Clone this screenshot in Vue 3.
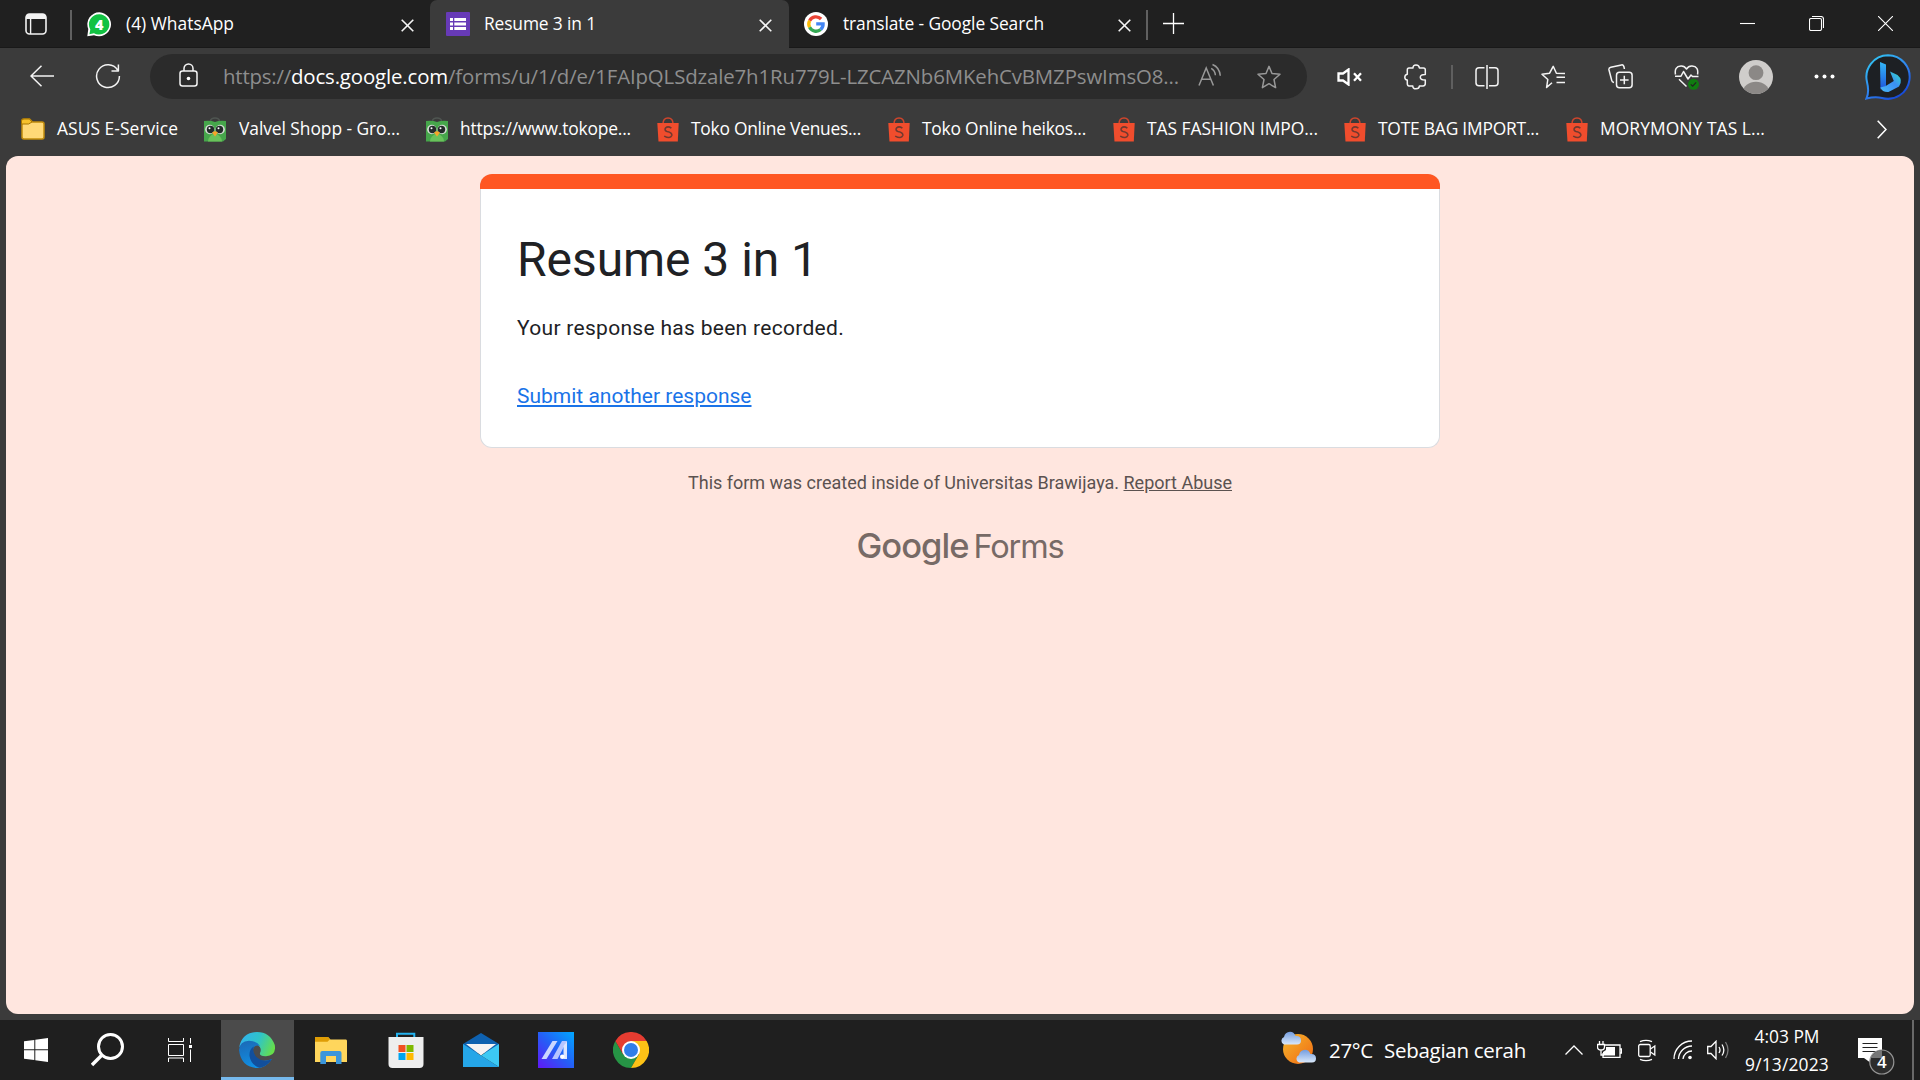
<script setup>
const bookmarks = [
  { icon: 'folder', label: 'ASUS E-Service', cell: 184, pad: 37, text: 121 },
  { icon: 'owl', label: 'Valvel Shopp - Gro...', cell: 222, pad: 35, text: 161 },
  { icon: 'owl', label: 'https://www.tokope...', cell: 231, pad: 34, text: 171 },
  { icon: 'bag', label: 'Toko Online Venues...', cell: 231, pad: 34, text: 170 },
  { icon: 'bag', label: 'Toko Online heikos...', cell: 225, pad: 34, text: 164 },
  { icon: 'bag', label: 'TAS FASHION IMPO...', cell: 231, pad: 34, text: 171 },
  { icon: 'bag', label: 'TOTE BAG IMPORT...', cell: 222, pad: 34, text: 161 },
  { icon: 'bag', label: 'MORYMONY TAS L...', cell: 220, pad: 34, text: 165 },
]

// Spreads a run of text over the given width by tracking.
const vFit = {
  mounted(el, { value }) {
    const width = el.getBoundingClientRect().width
    el.style.letterSpacing = (value - width) / el.textContent.length + 'px'
  },
}
</script>

<template>
  <div class="screen">
    <header class="tabs">
      <div class="workspace">
        <svg width="22" height="22" viewBox="0 0 22 22"><rect x="1" y="1" width="20" height="20" rx="3.5" fill="none" stroke="#f2f2f2" stroke-width="1.6" /><path d="M1 6V4Q1 1 4 1H18Q21 1 21 4V6Z" fill="#f2f2f2" /><path d="M5.6 5V21" stroke="#f2f2f2" stroke-width="1.4" /></svg>
      </div>
      <i class="vline"></i>
      <div class="tab first">
        <svg class="fav" width="25" height="25" viewBox="0 0 25 25"><path d="M12.5 .3A12 12 0 1 1 7 23.2L.3 24.2 1.3 17A12 12 0 0 1 12.5 .3Z" fill="#fff" /><path d="M12.5 2.2A10.2 10.2 0 1 1 7 21.2L2.4 22.2 3.3 17.4A10.2 10.2 0 0 1 12.5 2.2Z" fill="#12c243" /><text x="12.3" y="17.6" text-anchor="middle" font-family="Open Sans, sans-serif" font-weight="800" font-size="14.5" fill="#fff">4</text></svg>
        <span class="title"><span v-fit="108">(4) WhatsApp</span></span>
        <svg class="x" width="13" height="13" viewBox="0 0 13 13"><path d="M.7.7 12.3 12.3M12.3.7.7 12.3" /></svg>
      </div>
      <div class="tab active">
        <svg class="fav" width="24" height="24" viewBox="0 0 24 24"><rect width="24" height="24" rx="1" fill="#673ab7" /><path d="M4 6h3v3H4zM8.3 6H20v3H8.3zM4 10.5h3v3H4zM8.3 10.5H20v3H8.3zM4 15h3v3H4zM8.3 15H20v3H8.3z" fill="#fff" /></svg>
        <span class="title"><span v-fit="112">Resume 3 in 1</span></span>
        <svg class="x" width="13" height="13" viewBox="0 0 13 13"><path d="M.7.7 12.3 12.3M12.3.7.7 12.3" /></svg>
      </div>
      <div class="tab last">
        <svg class="fav" width="24" height="24" viewBox="0 0 24 24"><circle cx="12" cy="12" r="12" fill="#fff" /><g fill="none" stroke-width="3.3"><path d="M17.1 7A7.2 7.2 0 0 0 5.6 8.7" stroke="#ea4335" /><path d="M5.6 8.7A7.2 7.2 0 0 0 5.6 15.3" stroke="#fbbc05" /><path d="M5.6 15.3A7.2 7.2 0 0 0 16.7 17.5" stroke="#34a853" /><path d="M16.7 17.5A7.2 7.2 0 0 0 19.1 11.8H12.2" stroke="#4285f4" /></g></svg>
        <span class="title"><span v-fit="201">translate - Google Search</span></span>
        <svg class="x" width="13" height="13" viewBox="0 0 13 13"><path d="M.7.7 12.3 12.3M12.3.7.7 12.3" /></svg>
      </div>
      <i class="vline"></i>
      <svg class="plus" width="21" height="21" viewBox="0 0 21 21"><path d="M0 10.5H21M10.5 0V21" stroke="#fff" stroke-width="1.3" /></svg>
      <div class="window">
        <svg width="15" height="15" viewBox="0 0 15 15"><path d="M0 7.5H15" /></svg>
        <svg width="15" height="15" viewBox="0 0 15 15"><rect x=".5" y="2.5" width="12" height="12" rx="1.5" /><path d="M3 .5H12Q14.5.5 14.5 3V12" /></svg>
        <svg width="15" height="15" viewBox="0 0 15 15"><path d="M0 0 15 15M15 0 0 15" /></svg>
      </div>
    </header>

    <nav class="toolbar">
      <svg class="back" width="24" height="22" viewBox="0 0 24 22"><path d="M24 11H1M11.5.7 1 11 11.5 21.3" class="ln" /></svg>
      <svg class="reload" width="26" height="26" viewBox="0 0 26 26"><path d="M22.6 7A11.4 11.4 0 1 0 24.4 13M23.4 1.5V8H16.5" class="ln" /></svg>
      <div class="address">
        <svg class="lock" width="19" height="24" viewBox="0 0 19 24"><rect x="1" y="8" width="17" height="15" rx="2.5" class="ln" /><path d="M5 8V5.5a4.5 4.5 0 0 1 9 0V8" class="ln" /><circle cx="9.5" cy="15.5" r="1.8" fill="#fff" /></svg>
        <div class="url"><span v-fit="68">https://</span><span v-fit="157" class="host">docs.google.com</span><span v-fit="731">/forms/u/1/d/e/1FAIpQLSdzale7h1Ru779L-LZCAZNb6MKehCvBMZPswImsO8...</span></div>
        <svg class="aloud" width="24" height="24" viewBox="0 0 24 24"><g fill="none" stroke="#989898" stroke-width="1.5"><path d="M1 22.5 8.2 5 15.4 22.5M3.6 16.3H12.8M13.2 5.4Q17 7.6 17.4 12.2M14.5 1.5Q21.5 4.3 22.3 12.8" /></g></svg>
        <svg width="24" height="24" viewBox="0 0 24 24"><path d="M12 1.4 15 8.5 23 9.2 17 14.5 18.6 22.6 12 18.7 5.4 22.6 7 14.5 1 9.2 9 8.5Z" fill="none" stroke="#989898" stroke-width="1.5" stroke-linejoin="round" /></svg>
      </div>
      <div class="tools">
        <div><svg width="25" height="18" viewBox="0 0 25 18"><path d="M1.5 5.5H6L11.5 1.5V16.5L6 12.5H1.5Z" fill="none" stroke="#fff" stroke-width="2.3" /><path d="M17 5.2 24 12.8M24 5.2 17 12.8" stroke="#fff" stroke-width="2.3" /></svg></div>
        <div><svg width="24" height="26" viewBox="0 0 24 26"><path class="ln" d="M5 4H9Q8.9 1 12 1T15.4 4H19.5Q21.3 4 21.3 6V10.5Q16.3 10.4 16.3 13.2T21.3 16V19.6Q21.3 22 19 22H15.4Q15.3 24.8 12 24.8T8.8 22H5Q3.3 22 3.3 19.6V16Q.8 15.6.8 13.2T3.3 10.2V6Q3.3 4 5 4Z" /></svg></div>
        <i></i>
        <div><svg width="24" height="24" viewBox="0 0 24 24"><path class="ln" d="M9.5 2.8H4Q1 2.8 1 5.8V17.8Q1 20.8 4 20.8H9.5M14 2.8H20Q23 2.8 23 5.8V17.8Q23 20.8 20 20.8H14M12 0V24" /></svg></div>
        <div><svg width="25" height="24" viewBox="0 0 25 24"><path class="ln" d="M11 17.8 5.6 22.4 6.8 14.5 1 9.2 8.6 8.2 12.2 1.3 15.4 8.2 24 8.5M15.5 12.3H24M15.5 17.5H24" /></svg></div>
        <div><svg width="25" height="25" viewBox="0 0 25 25"><path class="ln" d="M6 18.5Q4 18 3.7 16.3L1 6Q.5 3.8 2.8 3.2L13.5.9Q16 .5 16.4 5" /><rect class="ln" x="8.5" y="8.2" width="15.6" height="15.6" rx="3" /><path class="ln" d="M16.3 11.7V20.3M12 16H20.6" /></svg></div>
        <div><svg width="26" height="26" viewBox="0 0 26 26"><path class="ln" d="M1.5 10.5Q0 2.5 7 2Q10.5 1.8 12.5 5Q14.5 1.8 18 2Q25 2.5 23.5 10.5M1 12.2H7L9.5 7.5 14 15 17 11 18.5 12.5H24.5M5 15.3 12.5 22.5" /><circle cx="19.5" cy="20.3" r="5.5" fill="#107c10" /><path d="M16.8 20.3 18.7 22.2 22.2 18.3" stroke="#222" stroke-width="1.2" fill="none" /></svg></div>
        <div class="person"><svg width="34" height="34" viewBox="0 0 34 34"><clipPath id="face"><circle cx="17" cy="17" r="17" /></clipPath><g clip-path="url(#face)"><rect width="34" height="34" fill="#cfcdcb" /><circle cx="17" cy="12.7" r="7.4" fill="#8b8886" /><ellipse cx="17" cy="32" rx="13" ry="10.2" fill="#8b8886" /></g></svg></div>
        <div class="more"><svg width="21" height="5" viewBox="0 0 21 5"><g fill="#fff"><circle cx="2.5" cy="2.5" r="2" /><circle cx="10.5" cy="2.5" r="2" /><circle cx="18.5" cy="2.5" r="2" /></g></svg></div>
        <div class="bing"><svg width="46" height="46" viewBox="0 0 46 46"><defs><linearGradient id="ring" x1="0" y1="0" x2=".7" y2="1"><stop offset="0" stop-color="#32d0f5" /><stop offset=".6" stop-color="#2f82ee" /><stop offset="1" stop-color="#1649d8" /></linearGradient><linearGradient id="stem" x1="0" y1="0" x2="0" y2="1"><stop offset="0" stop-color="#34b8f8" /><stop offset="1" stop-color="#1d54dc" /></linearGradient><linearGradient id="bowl" x1="0" y1="1" x2="1" y2="0"><stop offset="0" stop-color="#49b9f7" /><stop offset=".55" stop-color="#3b8ff3" /><stop offset="1" stop-color="#30e4c5" /></linearGradient></defs><path d="M23 1.2A21.8 21.8 0 1 1 17 44Q10 42.5 1.5 44.5Q4.5 38 2 28A21.8 21.8 0 0 1 23 1.2Z" fill="#1d2024" stroke="url(#ring)" stroke-width="2" /><path d="M15 8 21 10.4V32L15.5 35.5Z" fill="url(#stem)" /><path d="M25 17.5 32.5 21Q38.5 26 34 32.5L23.5 38Q17.5 38.5 15.3 33.5L20.7 32 28.8 27Z" fill="url(#bowl)" /></svg></div>
      </div>
    </nav>

    <div class="bookmarks">
      <div v-for="b in bookmarks" :key="b.label" class="bookmark" :style="{ width: b.cell + 'px' }">
        <span class="bicon" :style="{ width: b.pad + 'px' }">
          <svg v-if="b.icon === 'folder'" width="26" height="24" viewBox="0 0 26 24"><path d="M2 5V3.5Q2 2 4 2H9.5L12.5 5H22Q24 5 24 7V20Q24 22 22 22H4Q2 22 2 20Z" fill="#ffd977" stroke="#c18c0c" stroke-width="1.5" /><path d="M1.5 7H8.5L12 5 9.5 2H4Q1.5 2 1.5 4Z" fill="#f6c12c" stroke="#a87600" /></svg>
          <svg v-else-if="b.icon === 'owl'" width="22" height="25" viewBox="0 0 22 25"><path d="M6.5 4Q7 1 11 1T15.5 4" fill="none" stroke="#4f5551" stroke-width="1.6" /><path d="M0 4Q6 3 11 5Q16 3 22 4V22L19 24.5H0Z" fill="#46a64b" /><path d="M4 24.5Q4 19 11 16Q18 19 18 24.5Z" fill="#69c25b" /><circle cx="5.8" cy="12.5" r="4.7" fill="#d4dcd4" /><circle cx="16.2" cy="12.5" r="4.7" fill="#d4dcd4" /><circle cx="6.5" cy="12.5" r="3.7" fill="#242a2a" /><circle cx="15.5" cy="12.5" r="3.7" fill="#242a2a" /><circle cx="5.5" cy="11.3" r="1" fill="#fff" /><circle cx="14.5" cy="11.3" r="1" fill="#fff" /><path d="M8 15.5 11 14 14 15.5 11 19.5Z" fill="#f6a429" /></svg>
          <svg v-else width="22" height="25" viewBox="0 0 22 25"><path d="M6 7Q6 1 11 1T16 7" fill="none" stroke="#cf452c" stroke-width="1.5" /><path d="M.3 6H21.7L20.8 24.5H1.5Z" fill="#f04d2d" /><path d="M14.4 11.2Q11 8.8 8.7 10.8Q6.9 13.4 10 14.5Q15.5 15.6 14.8 18.5Q13.2 22.3 7.2 19.1" fill="none" stroke="#71392f" stroke-width="1.6" /></svg>
        </span>
        <span class="blabel"><span v-fit="b.text">{{ b.label }}</span></span>
      </div>
      <svg class="overflow" width="10" height="19" viewBox="0 0 10 19"><path d="M.7.7 9 9.5.7 18.3" fill="none" stroke="#fff" stroke-width="1.6" /></svg>
    </div>

    <main class="page">
      <section class="card">
        <div class="strip"></div>
        <div class="body">
          <h1><span v-fit="301">Resume 3 in 1</span></h1>
          <p><span v-fit="327">Your response has been recorded.</span></p>
          <a><span v-fit="234.5">Submit another response</span></a>
        </div>
      </section>
      <p class="note"><span v-fit="435.5">This form was created inside of Universitas Brawijaya. </span><span v-fit="108.5" class="u">Report Abuse</span></p>
      <div class="logo"><b v-fit="112">Google</b><span v-fit="90">Forms</span></div>
    </main>

    <footer class="taskbar">
      <div class="task"><svg width="24" height="24" viewBox="0 0 24 24"><path d="M0 3.3 10.3 1.9V11.3H0ZM11.3 1.7 24 0V11.3H11.3ZM0 12.3H10.3V22.1L0 20.7ZM11.3 12.3H24V24L11.3 22.3Z" fill="#fff" /></svg></div>
      <div class="task"><svg width="34" height="34" viewBox="0 0 34 34"><circle cx="19.5" cy="13.5" r="12" fill="none" stroke="#fff" stroke-width="3" /><path d="M11 22 1 32" stroke="#fff" stroke-width="3.4" /></svg></div>
      <div class="task"><svg width="24" height="24" viewBox="0 0 24 24"><path d="M.5 0V3.5H15.5V0M.5 24V20H15.5V24M.5 6.5H15.5V17.5H.5ZM22.5 0V5.5M22.5 11.5V24" fill="none" stroke="#fff" /><path d="M21 7h3v3h-3z" fill="#fff" /></svg></div>
      <div class="task current"><svg width="36" height="36" viewBox="0 0 36 36"><defs><linearGradient id="eg" x1="0" y1=".3" x2="1" y2=".6"><stop offset="0" stop-color="#31b2ee" /><stop offset=".5" stop-color="#2fc4c9" /><stop offset="1" stop-color="#67df48" /></linearGradient><linearGradient id="eb" x1="0" y1="0" x2=".4" y2="1"><stop offset="0" stop-color="#1c68b4" /><stop offset="1" stop-color="#1090e5" /></linearGradient></defs><path d="M.3 15Q3 .5 18 0Q31 0 35.8 13Q37.5 24 27 24.3Q20 24.5 21 21Q23.5 16 18 12.5Q8 8 .3 15Z" fill="url(#eg)" /><path d="M0 18Q.7 9 10 8.8Q18 9 21 14Q15 12 14 18Q14 26.5 22 28.5Q28 29.5 33 27Q27 36 18 36Q2 35 0 18Z" fill="url(#eb)" /><path d="M15 14.5Q10 17 10.5 24Q12 33 20.5 35.7Q28.5 34.5 33 27Q24 31 18 25.5Q12.5 20 15 14.5Z" fill="#124f9c" /></svg></div>
      <div class="task wide"><svg width="32" height="27" viewBox="0 0 32 27"><path d="M0 0H13L15.5 2.5H31Q32 2.5 32 4V25H0Z" fill="#ffd65c" /><path d="M0 0H13L15 2.2 12.5 4.8H0Z" fill="#df9d05" /><path d="M5.3 27V16Q5.3 14 7.3 14H24.5Q26.5 14 26.5 16V27H21V19H11V27Z" fill="#3b96db" /></svg></div>
      <div class="task wide"><svg width="36" height="36" viewBox="0 0 36 36"><path d="M9 7V1.7H26.3V7" fill="none" stroke="#24b3ef" stroke-width="2" /><path d="M.5 5H35.5V32Q35.5 36 31.5 36H4.5Q.5 36 .5 32Z" fill="#eee" /><path d="M10.5 13h7v7h-7z" fill="#f25022" /><path d="M18.5 13h7v7h-7z" fill="#7fba00" /><path d="M10.5 21h7v7h-7z" fill="#00a4ef" /><path d="M18.5 21h7v7h-7z" fill="#ffb900" /></svg></div>
      <div class="task wide"><svg width="36" height="34" viewBox="0 0 36 34"><path d="M0 11 18 0 36 11V20H0Z" fill="#0e61b0" /><path d="M3 11H33L18 22.5Z" fill="#f5f3f3" /><path d="M0 11 36 34H0Z" fill="#25a6e8" /><path d="M36 11V34L18 22.5Z" fill="#3cc9f4" /></svg></div>
      <div class="task wide"><svg width="36" height="36" viewBox="0 0 36 36"><defs><linearGradient id="ma" x1="0" y1="1" x2="1" y2="0"><stop offset="0" stop-color="#6117f6" /><stop offset=".5" stop-color="#245ff6" /><stop offset="1" stop-color="#00a8ff" /></linearGradient></defs><rect width="36" height="36" fill="url(#ma)" /><path d="M14.5 9H19.5L8.5 27H3.5Z" fill="#cbd7ff" /><path d="M24 9H29L19.5 27H14Z" fill="#b7c5ff" /><path d="M29 9V27H25.5V14Z" fill="#dce5ff" /><circle cx="24.3" cy="24.8" r="2.3" fill="#fff" /></svg></div>
      <div class="task wide"><svg width="36" height="36" viewBox="0 0 36 36"><path d="M2.4 9A18 18 0 0 0 18 36L25.8 22.5H10.2Z" fill="#269445" /><path d="M18 9H33.6A18 18 0 0 1 18 36L25.8 22.5Z" fill="#fdc216" /><path d="M2.4 9A18 18 0 0 1 33.6 9H18L10.2 22.5Z" fill="#e53c31" /><circle cx="18" cy="18" r="9" fill="#fff" /><circle cx="18" cy="18" r="7" fill="#307ee9" /></svg></div>
      <div class="weather">
        <svg width="36" height="34" viewBox="0 0 36 34"><defs><linearGradient id="sun" x1="0" y1="0" x2="1" y2="1"><stop offset="0" stop-color="#f5b82d" /><stop offset="1" stop-color="#f06812" /></linearGradient><linearGradient id="cl" x1="0" y1="0" x2="0" y2="1"><stop offset="0" stop-color="#729cdf" /><stop offset="1" stop-color="#d9e8fa" /></linearGradient></defs><circle cx="18" cy="18" r="15" fill="url(#sun)" /><path id="cloud" d="M4 13.5A4 4 0 0 1 4 6Q5 1 10 .7Q14 .7 15.5 5Q21 4.5 21 9.5Q21 13.5 17 13.5Z" fill="url(#cl)" /><use href="#cloud" x="15" y="18" /></svg>
        <span class="temp"><span v-fit="44">27°C</span></span>
        <span class="cond"><span v-fit="142">Sebagian cerah</span></span>
      </div>
      <div class="tray">
        <svg width="18" height="10" viewBox="0 0 18 10"><path d="M.5 9.5 9 1 17.5 9.5" class="tr" /></svg>
        <svg class="battery" width="25" height="17" viewBox="0 0 25 17"><path d="M8 4H23V16.3H6V12M23 8H24.5V12H23M2.5 0V3M6 0V3M.5 3.5H7.5V6Q7.5 9 4 9T.5 6ZM4 9V14H7" class="tr" /><path d="M9 6H18V14.5H6V11L9 9Z" fill="#fff" /></svg>
        <svg class="meet" width="18" height="23" viewBox="0 0 18 23"><rect x=".7" y="5.5" width="11.5" height="12" rx="1.5" class="tr" /><path d="M12.5 10 16.8 7V16L12.5 13M2 2.7Q8 .2 14 2.7M2 20.3Q8 22.8 14 20.3" class="tr" /></svg>
        <svg class="wifi" width="20" height="20" viewBox="0 0 20 20"><path d="M1 19A18 18 0 0 1 19 1M5.5 19A13.5 13.5 0 0 1 19 6M10 19A9 9 0 0 1 19 11" class="tr" /><circle cx="17" cy="17.5" r="1.8" fill="#fff" /></svg>
        <svg class="volume" width="23" height="20" viewBox="0 0 23 20"><path d="M.7 6.5H4L9 1.3V18.7L4 13.5H.7ZM12 7Q14 10 12 13M15 4.5Q18.7 10 15 15.5" class="tr" /><path d="M18.5 2Q23.5 10 18.5 18" fill="none" stroke="#7b7b7b" stroke-width="1.3" /></svg>
      </div>
      <div class="clock"><span v-fit="65">4:03 PM</span><span v-fit="84">9/13/2023</span></div>
      <svg class="notice" width="38" height="38" viewBox="0 0 38 38"><path d="M0 0H24V20H16L11.5 24 6 20H0Z" fill="#fff" /><path d="M4.5 5.5H19.5M4.5 9.5H19.5M4.5 13.5H19.5" stroke="#222" stroke-width="1.2" /><circle cx="23.8" cy="24" r="12" fill="#2c2c2c" stroke="#969696" stroke-width="1.2" /><path d="M24 12V20H13Q16 12.8 24 12Z" fill="#777" /><text x="23.8" y="29.8" text-anchor="middle" font-size="17" font-weight="600" fill="#fff" font-family="Open Sans, sans-serif">4</text></svg>
      <i class="desktop"></i>
    </footer>
  </div>
</template>

<style>
body { margin: 0; }
</style>

<style scoped>
.screen { width: 1920px; height: 1080px; display: flex; flex-direction: column; overflow: hidden; background: #3b3b3b; color: #fff; font: 17.4px/24px "Open Sans", sans-serif; }
svg { display: block; flex: none; }
span { white-space: pre; }
.ln { fill: none; stroke: #f4f4f4; stroke-width: 1.5; stroke-linejoin: round; }
.tabs { flex: none; height: 48px; display: flex; align-items: center; background: #202020; box-shadow: inset 0 -1px #191919; }
.workspace { width: 70px; box-sizing: border-box; padding-left: 25px; }
.vline { width: 2px; height: 30px; margin-top: 2px; background: #606060; }
.tab { height: 48px; box-sizing: border-box; display: flex; align-items: center; padding-right: 16px; }
.tab.first { width: 358px; padding-left: 15px; }
.tab.active { width: 359px; background: #3b3b3b; padding-left: 16px; padding-right: 17px; border-radius: 7px 7px 0 0; }
.tab.active .fav { margin-right: 14px; }
.tab.last { width: 357px; padding-left: 15px; padding-right: 15px; }
.fav { margin-right: 15px; }
.title { flex: 1; margin-top: -2px; }
.tab.first .fav { margin-right: 14px; }
.x { margin-top: 2px; }
.x path { stroke: #f4f4f4; stroke-width: 1.6; }
.plus { margin: -2px 0 0 15px; }
.window { margin: -1px 0 0 auto; display: flex; gap: 54px; padding-right: 27px; }
.window path, .window rect { fill: none; stroke: #fff; stroke-width: 1.1; }
.toolbar { flex: none; height: 57px; display: flex; align-items: center; }
.back { margin: -2px 0 0 30px; }
.reload { margin: -1px 0 0 41px; }
.address { margin-left: 29px; width: 1157px; height: 45px; border-radius: 23px; background: #2b2b2b; display: flex; align-items: center; box-sizing: border-box; }
.lock { margin: -3px 0 0 29px; }
.url { margin: -2px 0 0 25px; width: 956px; font-size: 20.4px; line-height: 30px; color: #8e8e8e; display: flex; }
.url .host { color: #fff; }
.aloud { margin: -4px 35px 0 19px; }
.tools { display: flex; align-items: center; margin-left: 9px; }
.tools div { width: 66.5px; display: flex; justify-content: center; }
.tools i { width: 2px; height: 24px; margin: 0 1px 0 2px; background: #5f5f5f; }
.tools .person { width: 71px; }
.tools .more { width: 67px; }
.tools .bing { width: 60px; }
.bookmarks { flex: none; height: 51px; display: flex; align-items: center; padding-left: 20px; box-sizing: border-box; padding-bottom: 3px; }
.bookmark { display: flex; align-items: center; flex: none; }
.blabel { margin-top: -2px; }
.overflow { margin-left: 91px; }
.page { flex: none; width: 1908px; height: 858px; margin: 0 6px 6px; border-radius: 12px; background: #ffe6df; display: flex; flex-direction: column; align-items: center; font-family: Roboto, sans-serif; box-sizing: border-box; padding-top: 18px; }
.card { width: 960px; height: 274px; box-sizing: border-box; border-radius: 12px; background: #fff; border: 1px solid #dadce0; border-top: 0; flex: none; }
.strip { height: 15px; margin: 0 -1px; border-radius: 12px 12px 0 0; background: #ff5722; }
.body { padding: 36px 36px 0; color: #202124; display: flex; flex-direction: column; align-items: flex-start; }
h1 { margin: 5px 0 0; font-size: 48px; line-height: 60px; font-weight: 400; }
.body p { margin: 23px 0 0; font-size: 21px; line-height: 30px; }
.body a { margin-top: 38px; font-size: 21px; line-height: 30px; color: #1a73e8; text-decoration: underline; }
.note { margin: 22px 0 0; font-size: 18px; line-height: 26px; color: #5b5250; }
.u { text-decoration: underline; }
.logo { margin-top: 28px; display: flex; align-items: baseline; gap: 5px; color: #776a66; font: 32.5px/44px Inter, sans-serif; }
.logo b { font-weight: 500; font-size: 34.5px; }
.taskbar { flex: none; height: 60px; background: #1f1f1f; display: flex; align-items: center; }
.task { width: 72px; height: 60px; display: flex; align-items: center; justify-content: center; }
.task.wide { width: 75px; }
.task.current { width: 73px; margin-left: 5px; background: #4b4b4b; box-shadow: inset 0 -3px #76b9ed; box-sizing: border-box; padding-right: 2px; }
.task.current + .wide { margin-left: -1px; }
.weather { margin-left: 612px; width: 285px; display: flex; align-items: center; font-size: 20.5px; }
.weather svg { margin-top: -4px; }
.temp { width: 55px; margin-left: 13px; }
.tray { display: flex; align-items: center; width: 180px; }
.tr { fill: none; stroke: #fff; stroke-width: 1.3; }
.battery { margin-left: 14px; margin-top: -1px; }
.meet { margin-left: 16px; }
.wifi { margin-left: 17px; }
.volume { margin-left: 14px; }
.clock { width: 84px; display: flex; flex-direction: column; align-items: center; line-height: 28px; margin-top: -1px; }
.notice { margin-left: 29px; margin-top: 13px; }
.desktop { margin-left: 16px; width: 2px; height: 60px; background: #696969; }
</style>
